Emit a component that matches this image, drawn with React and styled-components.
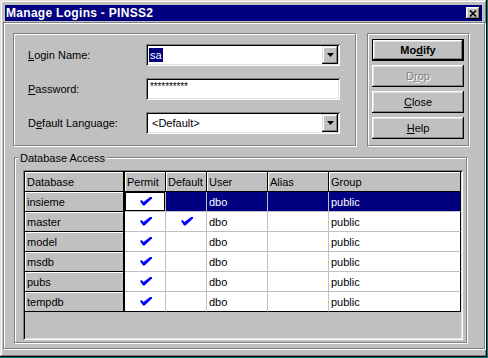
import React from "react";
import styled, { createGlobalStyle } from "styled-components";

const GlobalStyle = createGlobalStyle`
  html, body {
    margin: 0;
    padding: 0;
    background: #008080;
  }
  body {
    font-family: "Liberation Sans", Arial, sans-serif;
    font-size: 11px;
    color: #000;
  }
`;

const raised = `
  box-shadow: inset -1px -1px 0 #000, inset 1px 1px 0 #fff,
    inset -2px -2px 0 #808080, inset 2px 2px 0 #dfdfdf;
`;

const Window = styled.div`
  width: 487px;
  height: 357px;
  box-sizing: border-box;
  padding: 5px;
  background: #c0c0c0;
  box-shadow: inset -1px -1px 0 #000, inset 1px 1px 0 #dfdfdf,
    inset -2px -2px 0 #808080, inset 2px 2px 0 #fff;
  display: flex;
  flex-direction: column;
`;

const TitleBar = styled.div`
  height: 16px;
  background: #000080;
  color: #fff;
  display: flex;
  align-items: center;
  justify-content: space-between;
  padding: 0 2px 0 1px;
  font-weight: bold;
  font-size: 12px;
  letter-spacing: 0.3px;
`;

const CloseBox = styled.div`
  width: 14px;
  height: 12px;
  background: #c0c0c0;
  display: flex;
  align-items: center;
  justify-content: center;
  ${raised}
`;

const Etched = styled.div`
  box-sizing: border-box;
  border: 1px solid #808080;
  box-shadow: 1px 1px 0 #fff, inset 1px 1px 0 #fff;
`;

const Body = styled(Etched)`
  flex: 1;
  display: flex;
  flex-direction: column;
  margin: 1px -3px 3px -2px;
  padding: 10px 0 0 9px;
`;

const TopRow = styled.div`
  display: flex;
  gap: 11px;
`;

const FormPanel = styled(Etched)`
  width: 343px;
  height: 113px;
  display: grid;
  grid-template-columns: 118px 194px;
  grid-auto-rows: 22px;
  row-gap: 12px;
  align-items: center;
  padding: 10px 0 0 14px;
`;

const ButtonPanel = styled(Etched)`
  width: 102px;
  height: 113px;
  display: flex;
  flex-direction: column;
  gap: 4px;
  padding: 5px 0 0 4px;
`;

const Label = styled.span`
  white-space: nowrap;
`;

const U = styled.span`
  text-decoration: underline;
`;

const Field = styled.div`
  height: 22px;
  box-sizing: border-box;
  background: #fff;
  box-shadow: inset 1px 1px 0 #808080, inset -1px -1px 0 #fff,
    inset 2px 2px 0 #000, inset -2px -2px 0 #dfdfdf;
  padding: 2px 2px 2px 3px;
  display: flex;
  align-items: center;
  font-size: ${(p) => (p.$small ? "10px" : "11px")};
`;

const Value = styled.span`
  padding: 0 1px;
  line-height: 14px;
  background: ${(p) => (p.$sel ? "#000080" : "transparent")};
  color: ${(p) => (p.$sel ? "#fff" : "#000")};
  margin-left: ${(p) => p.$indent || 0}px;
`;

const Asterisks = styled.span`
  padding: 0 1px;
  align-self: flex-start;
  line-height: 12px;
  margin-top: 1px;
  letter-spacing: -0.1px;
`;

const DropBtn = styled.div`
  margin-left: auto;
  width: 16px;
  height: 18px;
  background: #c0c0c0;
  display: flex;
  align-items: center;
  justify-content: center;
  box-shadow: inset -1px -1px 0 #000, inset 1px 1px 0 #dfdfdf,
    inset -2px -2px 0 #808080, inset 2px 2px 0 #fff;
`;

const Button = styled.button`
  width: 92px;
  height: 22px;
  box-sizing: border-box;
  padding: 0;
  margin: 0;
  font: inherit;
  font-weight: ${(p) => (p.$default ? "bold" : "normal")};
  color: ${(p) => (p.disabled ? "#808080" : "#000")};
  text-shadow: ${(p) => (p.disabled ? "1px 1px 0 #fff" : "none")};
  background: #c0c0c0;
  border: ${(p) => (p.$default ? "1px solid #000" : "none")};
  ${raised}
`;

const Group = styled(Etched)`
  margin: 11px 0 0 1px;
  width: 453px;
  height: 186px;
  display: flex;
  flex-direction: column;
`;

const GroupLabel = styled.span`
  display: block;
  width: fit-content;
  margin: -6px 0 0 3px;
  padding: 0 2px;
  line-height: 13px;
  background: #c0c0c0;
`;

const GridBox = styled.div`
  margin: 5px 0 0 8px;
  width: 440px;
  height: 170px;
  box-sizing: border-box;
  padding: 2px;
  background: #c0c0c0;
  box-shadow: inset 1px 1px 0 #808080, inset -1px -1px 0 #fff,
    inset 2px 2px 0 #000, inset -2px -2px 0 #dfdfdf;
`;

const Table = styled.div`
  display: grid;
  grid-template-columns: 100px 41px 41px 61px 61px 132px;
  grid-auto-rows: 20px;
`;

const HeadCell = styled.div`
  box-sizing: border-box;
  background: #c0c0c0;
  border-right: ${(p) => (p.$thick ? 2 : 1)}px solid #000;
  border-bottom: 1px solid #000;
  box-shadow: inset 1px 1px 0 #fff;
  padding-left: 2px;
  display: flex;
  align-items: center;
  white-space: nowrap;
`;

const Cell = styled.div`
  box-sizing: border-box;
  background: ${(p) => (p.$sel ? "#000080" : "#fff")};
  color: ${(p) => (p.$sel ? "#fff" : "#000")};
  border-right: 1px solid ${(p) => (p.$edge ? "#000" : "#c0c0c0")};
  border-bottom: 1px solid ${(p) => (p.$last ? "#000" : "#c0c0c0")};
  box-shadow: ${(p) => (p.$focus ? "inset 0 0 0 1px #000" : "none")};
  padding-left: 2px;
  display: flex;
  align-items: center;
  justify-content: ${(p) => (p.$center ? "center" : "flex-start")};
`;

const Check = () => (
  <svg width="12" height="9" viewBox="0 0 12 9">
    <polygon points="0,4 1.5,3 3.5,5 10,0 12,0 12,1.5 4.5,8.5 3,8.5" fill="#0000ff" />
  </svg>
);

const Arrow = () => (
  <svg width="7" height="4" viewBox="0 0 7 4">
    <polygon points="0,0 7,0 3.5,4" fill="#000" />
  </svg>
);

const CloseX = () => (
  <svg width="8" height="7" viewBox="0 0 8 7">
    <path d="M1 0.5 L7 6.5 M7 0.5 L1 6.5" stroke="#000" strokeWidth="1.6" />
  </svg>
);

const rows = [
  { db: "insieme", permit: true, def: false, sel: true },
  { db: "master", permit: true, def: true },
  { db: "model", permit: true },
  { db: "msdb", permit: true },
  { db: "pubs", permit: true },
  { db: "tempdb", permit: true },
];

export default function App() {
  return (
    <>
      <GlobalStyle />
      <Window>
        <TitleBar>
          <span>Manage Logins - PINSS2</span>
          <CloseBox>
            <CloseX />
          </CloseBox>
        </TitleBar>
        <Body>
          <TopRow>
            <FormPanel>
              <Label>
                <U>L</U>ogin Name:
              </Label>
              <Field>
                <Value $sel>sa</Value>
                <DropBtn>
                  <Arrow />
                </DropBtn>
              </Field>
              <Label>
                <U>P</U>assword:
              </Label>
              <Field $small>
                <Asterisks>**********</Asterisks>
              </Field>
              <Label>
                D<U>e</U>fault Language:
              </Label>
              <Field>
                <Value $indent={2}>&lt;Default&gt;</Value>
                <DropBtn>
                  <Arrow />
                </DropBtn>
              </Field>
            </FormPanel>
            <ButtonPanel>
              <Button $default>
                Mo<U>d</U>ify
              </Button>
              <Button disabled>
                D<U>r</U>op
              </Button>
              <Button>
                <U>C</U>lose
              </Button>
              <Button>
                <U>H</U>elp
              </Button>
            </ButtonPanel>
          </TopRow>
          <Group>
            <GroupLabel>Database Access</GroupLabel>
            <GridBox>
              <Table>
                <HeadCell $thick>Database</HeadCell>
                <HeadCell>Permit</HeadCell>
                <HeadCell>Default</HeadCell>
                <HeadCell>User</HeadCell>
                <HeadCell>Alias</HeadCell>
                <HeadCell>Group</HeadCell>
                {rows.map((r, i) => {
                  const last = i === rows.length - 1;
                  return (
                    <React.Fragment key={r.db}>
                      <HeadCell $thick>{r.db}</HeadCell>
                      <Cell $center $last={last} $focus={r.sel}>
                        {r.permit && <Check />}
                      </Cell>
                      <Cell $center $last={last} $sel={r.sel}>
                        {r.def && <Check />}
                      </Cell>
                      <Cell $last={last} $sel={r.sel}>
                        dbo
                      </Cell>
                      <Cell $last={last} $sel={r.sel} />
                      <Cell $last={last} $sel={r.sel} $edge>
                        public
                      </Cell>
                    </React.Fragment>
                  );
                })}
              </Table>
            </GridBox>
          </Group>
        </Body>
      </Window>
    </>
  );
}
